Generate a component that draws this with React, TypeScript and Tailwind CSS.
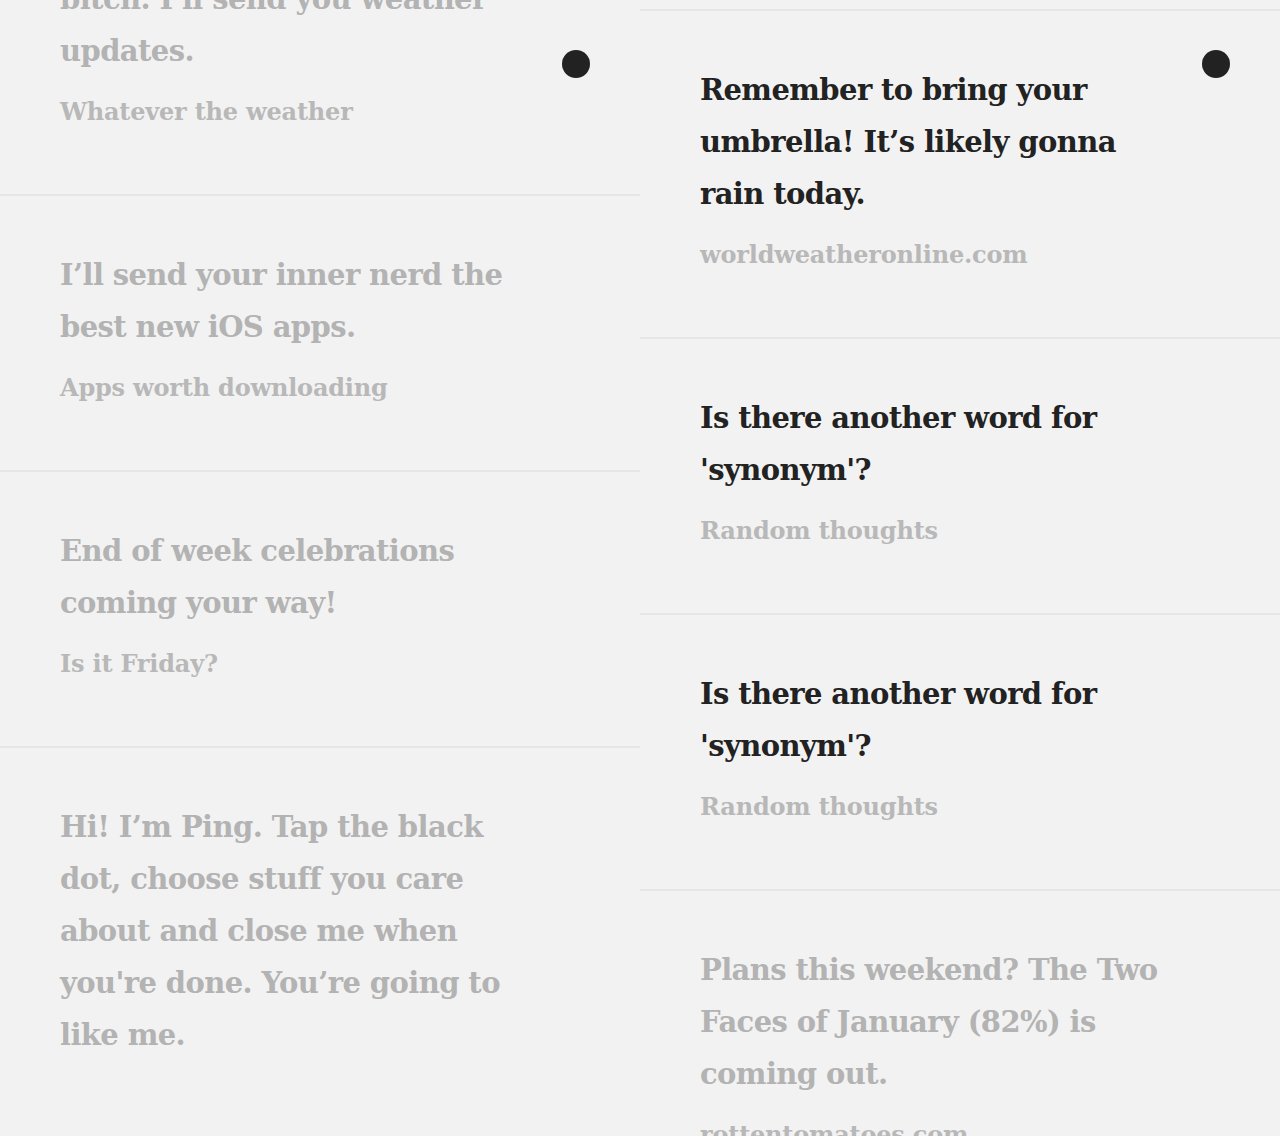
type Note = {
  lines: string[]
  source?: string
  active?: boolean
}

const leftNotes: Note[] = [
  {
    lines: ["Rain or shine, weather's a", "bitch. I’ll send you weather", "updates."],
    source: "Whatever the weather",
  },
  {
    lines: ["I’ll send your inner nerd the", "best new iOS apps."],
    source: "Apps worth downloading",
  },
  {
    lines: ["End of week celebrations", "coming your way!"],
    source: "Is it Friday?",
  },
  {
    lines: [
      "Hi! I’m Ping. Tap the black",
      "dot, choose stuff you care",
      "about and close me when",
      "you're done. You’re going to",
      "like me.",
    ],
  },
]

const rightNotes: Note[] = [
  {
    lines: ["Remember to bring your", "umbrella! It’s likely gonna", "rain today."],
    source: "worldweatheronline.com",
    active: true,
  },
  {
    lines: ["Is there another word for", "'synonym'?"],
    source: "Random thoughts",
    active: true,
  },
  {
    lines: ["Is there another word for", "'synonym'?"],
    source: "Random thoughts",
    active: true,
  },
  {
    lines: ["Plans this weekend? The Two", "Faces of January (82%) is", "coming out."],
    source: "rottentomatoes.com",
  },
]

function NoteCard({ note }: { note: Note }) {
  return (
    <article className="border-t-2 border-[#e6e6e6] px-[60px] pt-[53px] pb-[64px]">
      <h3
        className={`whitespace-nowrap text-[29px] font-bold leading-[52px] tracking-[-0.6px] ${
          note.active ? "text-[#222222]" : "text-[#b3b3b3]"
        }`}
      >
        {note.lines.map((line, i) => (
          <span key={i} className="block">
            {line}
          </span>
        ))}
      </h3>
      {note.source && (
        <p className="mt-[17px] whitespace-nowrap text-[24px] font-bold leading-[36px] tracking-[-0.2px] text-[#b8b8b8]">
          {note.source}
        </p>
      )}
    </article>
  )
}

function Column({ notes, offset }: { notes: Note[]; offset: string }) {
  return (
    <section className="relative h-full overflow-hidden bg-[#f2f2f2]">
      <div className={offset}>
        {notes.map((note, i) => (
          <NoteCard key={i} note={note} />
        ))}
      </div>
      <button
        aria-label="Menu"
        className="absolute top-[50px] right-[50px] h-7 w-7 rounded-full bg-[#222222]"
      />
    </section>
  )
}

export default function App() {
  return (
    <main className="grid h-screen grid-cols-2 overflow-hidden bg-[#f2f2f2] font-['DejaVu_Serif',serif]">
      <Column notes={leftNotes} offset="mt-[-134px]" />
      <Column notes={rightNotes} offset="pt-[9px]" />
    </main>
  )
}
